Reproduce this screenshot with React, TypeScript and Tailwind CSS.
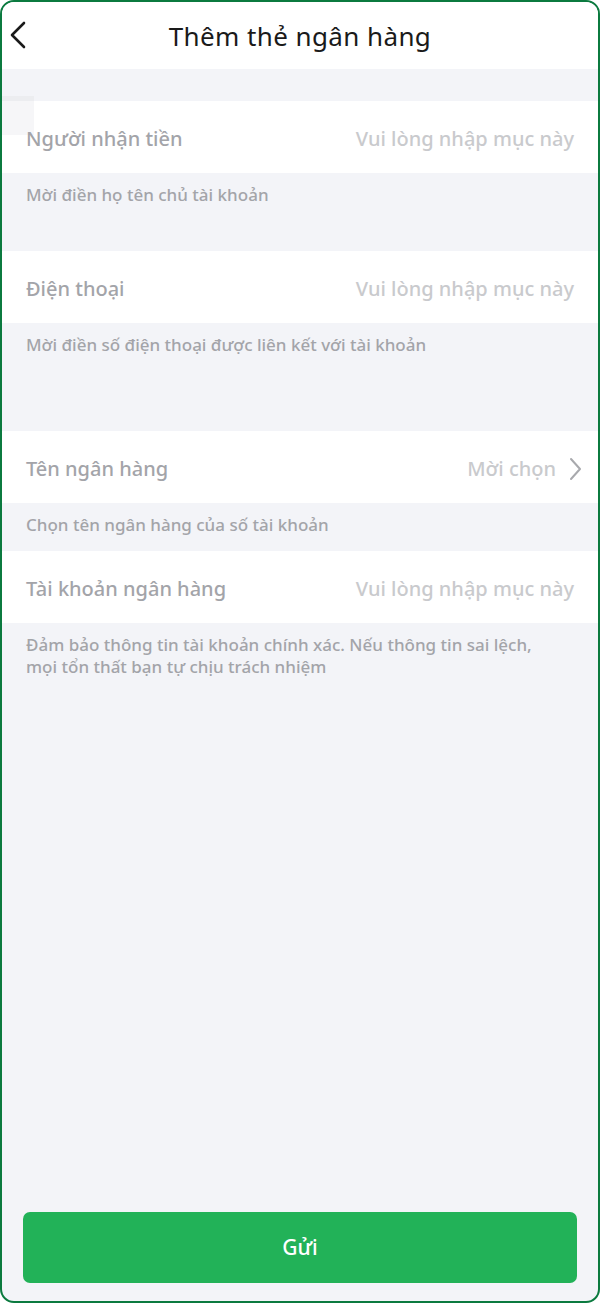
type Field = {
  label: string;
  placeholder: string;
  hint: string[];
  select?: boolean;
  gray: string;
};

const fields: Field[] = [
  {
    label: "Người nhận tiền",
    placeholder: "Vui lòng nhập mục này",
    hint: ["Mời điền họ tên chủ tài khoản"],
    gray: "h-[78px]",
  },
  {
    label: "Điện thoại",
    placeholder: "Vui lòng nhập mục này",
    hint: ["Mời điền số điện thoại được liên kết với tài khoản"],
    gray: "h-[108px]",
  },
  {
    label: "Tên ngân hàng",
    placeholder: "Mời chọn",
    hint: ["Chọn tên ngân hàng của số tài khoản"],
    select: true,
    gray: "h-[48px]",
  },
  {
    label: "Tài khoản ngân hàng",
    placeholder: "Vui lòng nhập mục này",
    hint: [
      "Đảm bảo thông tin tài khoản chính xác. Nếu thông tin sai lệch,",
      "mọi tổn thất bạn tự chịu trách nhiệm",
    ],
    gray: "h-auto",
  },
];

export default function App() {
  return (
    <div
      className="h-[1303px] w-[600px] bg-white"
      style={{ fontFamily: '"Noto Sans", "Open Sans", sans-serif' }}
    >
      <div className="flex h-full flex-col overflow-hidden rounded-[14px] border-2 border-[#0b7a3f] bg-[#f3f4f8]">
        <header className="relative flex h-[67px] shrink-0 items-center justify-center bg-white">
          <svg
            className="absolute left-[5px] top-[18px]"
            width="22"
            height="30"
            viewBox="0 0 22 30"
            fill="none"
          >
            <path
              d="M17 3 L5 15 L17 27"
              stroke="#1a1a1a"
              strokeWidth="2.6"
              strokeLinecap="round"
              strokeLinejoin="round"
            />
          </svg>
          <h1 className="pt-[2px] text-[26px] tracking-[0.4px] text-[#1a1a1a]">
            Thêm thẻ ngân hàng
          </h1>
        </header>

        <div className="relative h-[32px] shrink-0">
          <div className="absolute left-0 top-[27px] h-[39px] w-[32px] bg-[#ecedf0]" />
        </div>

        {fields.map((f) => (
          <div key={f.label}>
            <div className="relative flex h-[72px] items-center justify-between bg-white px-[24px] pt-[3px] text-[20px] font-medium">
              {f.label === "Người nhận tiền" && (
                <div className="absolute left-0 top-0 h-[34px] w-[32px] bg-[#f6f6f8]" />
              )}
              <span className="relative text-[#a3a4a9]">{f.label}</span>
              <span className="flex items-center text-[#c9cacd]">
                {f.placeholder}
                {f.select && (
                  <svg
                    className="ml-[12px] mr-[-8px]"
                    width="14"
                    height="26"
                    viewBox="0 0 14 26"
                    fill="none"
                  >
                    <path
                      d="M3 3 L12 13 L3 23"
                      stroke="#a8a9ad"
                      strokeWidth="2"
                      strokeLinecap="round"
                      strokeLinejoin="round"
                    />
                  </svg>
                )}
              </span>
            </div>
            <div
              className={`${f.gray} px-[24px] pt-[11px] text-[17px] font-medium leading-[22px] text-[#a3a4a9]`}
            >
              {f.hint.map((l) => (
                <div key={l}>{l}</div>
              ))}
            </div>
          </div>
        ))}

        <div className="flex-1" />

        <div className="px-[21px] pb-[18px]">
          <button className="flex h-[71px] w-full items-center justify-center rounded-[7px] bg-[#22b258] text-[21px] font-medium text-white">
            Gửi
          </button>
        </div>
      </div>
    </div>
  );
}
